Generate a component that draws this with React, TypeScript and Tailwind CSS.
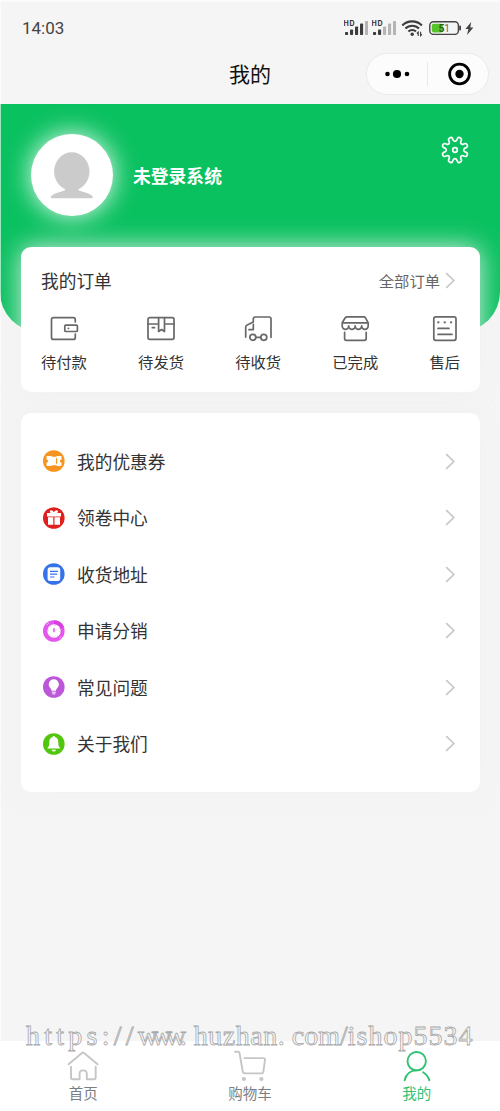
import React from 'react';

interface MenuItem {
  label: string;
  icon: React.ReactNode;
}

// 8-tooth gear outline around (15, 15)
const gearPoint = (r: number, deg: number) => {
  const a = (deg * Math.PI) / 180;
  return `${(15 + r * Math.cos(a)).toFixed(2)} ${(15 + r * Math.sin(a)).toFixed(2)}`;
};

const gearPath =
  Array.from({ length: 8 }, (_, i) => {
    const t = i * 45 + 22.5;
    return `${i === 0 ? 'M' : 'L'}${gearPoint(9.9, t - 12.5)} L${gearPoint(12, t - 10)} Q${gearPoint(13.3, t - 8)} ${gearPoint(13.2, t - 2)} L${gearPoint(13.2, t + 2)} Q${gearPoint(13.3, t + 8)} ${gearPoint(12, t + 10)} L${gearPoint(9.9, t + 12.5)} Q${gearPoint(7.6, t + 22.5)} ${gearPoint(9.9, t + 32.5)}`;
  }).join(' ') + 'Z';

const Signal = ({ strength }: { strength: number }) => (
  <svg width="24" height="16" viewBox="0 0 24 16">
    <text x="-0.5" y="5.8" fontSize="7" fontWeight="700" fontFamily="Inter, sans-serif" fill="#333" textLength="11">
      HD
    </text>
    {[3, 5.5, 8.5, 11.5, 14].map((h, i) => (
      <rect key={i} x={1 + i * 5} y={15 - h} width="3.1" height={h} rx="0.8" fill={i < strength ? '#3c3c3c' : '#b4b4b4'} />
    ))}
  </svg>
);

const StatusBar = () => (
  <div className="flex h-14 items-center justify-between pl-[22px] pr-[26px]">
    <span className="mt-0.5 font-[Roboto,sans-serif] text-[17px] text-[#444]">14:03</span>
    <div className="flex items-center">
      <Signal strength={4} />
      <span className="w-1" />
      <Signal strength={2} />
      <svg className="ml-[5px]" width="24" height="18" viewBox="0 0 24 18" fill="none" stroke="#3c3c3c" strokeWidth="2.1">
        <path d="M1.3 6.4a14 14 0 0 1 19.6 0" />
        <path d="M4.4 9.6a9.6 9.6 0 0 1 13.6 0" />
        <path d="M7.4 12.6a5.4 5.4 0 0 1 7.6 0" />
        <circle cx="11.2" cy="15.2" r="1.7" fill="#3c3c3c" stroke="none" />
        <path d="M17.2 17v-3.8l-1.3 1.3M19.6 12.8v3.8l1.3-1.3" strokeWidth="1.1" />
      </svg>
      <svg className="ml-1" width="33" height="14" viewBox="0 0 33 14">
        <rect x="0.8" y="0.8" width="28.6" height="12.6" rx="3.6" fill="none" stroke="#444" strokeWidth="1.4" />
        <rect x="2.8" y="2.8" width="11" height="8.6" rx="1.8" fill="#57c32b" />
        <rect x="30.2" y="4.6" width="1.8" height="5" rx="0.8" fill="#444" />
        <text x="9.5" y="10.8" fontSize="10.5" fontWeight="600" fontFamily="Roboto, sans-serif" fill="#2c5f1c">5</text>
        <text x="15" y="10.8" fontSize="10.5" fontFamily="Roboto, sans-serif" fill="#666">1</text>
      </svg>
      <svg className="ml-[3px]" width="9" height="13" viewBox="0 0 9 13" fill="#444">
        <path d="M6.2 0 0.4 7h3L2 13l6.4-7.6H5.3Z" />
      </svg>
    </div>
  </div>
);

const NavBar = () => (
  <div className="grid h-12 grid-cols-3 items-start">
    <span />
    <h1 className="mt-px text-center text-[21px] leading-8 text-[#111]">我的</h1>
    <div className="mt-[-3px] mr-[11px] flex h-[42px] w-[123px] items-center justify-self-end rounded-full border border-[#ebebeb] bg-[#fcfcfc]">
      <svg className="w-[60px]" height="24" viewBox="0 0 60 24">
        <circle cx="20.5" cy="12" r="2.3" />
        <circle cx="30" cy="12" r="4.1" />
        <circle cx="40" cy="12" r="2.3" />
      </svg>
      <span className="h-6 w-px bg-[#e8e8e8]" />
      <svg className="w-[60px]" height="24" viewBox="0 0 60 24">
        <circle cx="31.5" cy="12" r="9.9" fill="none" stroke="#000" strokeWidth="2.8" />
        <circle cx="31.5" cy="12" r="4.2" />
      </svg>
    </div>
  </div>
);

const Chevron = () => (
  <svg width="11" height="17" viewBox="0 0 11 17" fill="none" stroke="#c6c6c6" strokeWidth="1.6">
    <path d="M1.2 1.2 8.8 8.5 1.2 15.8" />
  </svg>
);

const OrderIcon = ({ children }: { children: React.ReactNode }) => (
  <svg width="30" height="30" viewBox="0 0 30 30" fill="none" stroke="#686868" strokeWidth="1.7" strokeLinecap="round" strokeLinejoin="round">
    {children}
  </svg>
);

const orders: MenuItem[] = [
  {
    label: '待付款',
    icon: (
      <OrderIcon>
        <path d="M26.3 9V6.6q0-2-2-2H4.5q-2 0-2 2v17.8q0 2 2 2h19.8q2 0 2-2V21" />
        <rect x="15.8" y="12.1" width="12.6" height="6.4" rx="1" />
        <path d="M19.3 15.3h.2" />
      </OrderIcon>
    ),
  },
  {
    label: '待发货',
    icon: (
      <OrderIcon>
        <rect x="2" y="4.6" width="26" height="21.8" rx="1.8" />
        <path d="M2 11h10.6M18.5 11H28M12.6 4.6v13.9l3-2 2.9 2V4.6M6.3 14.7h2.2" />
      </OrderIcon>
    ),
  },
  {
    label: '待收货',
    icon: (
      <OrderIcon>
        <path d="M10.3 9V6q0-2 2-2H26q2 0 2 2v18.3M10.3 9 4.2 12q-1.5.7-1.5 2.3v9.8" />
        <path d="M10.3 11.4v5.3H6M13 24.3h4.5" />
        <circle cx="9.8" cy="24.3" r="3" />
        <circle cx="20.8" cy="24.3" r="3" />
      </OrderIcon>
    ),
  },
  {
    label: '已完成',
    icon: (
      <OrderIcon>
        <path d="M7 3.8h17q1 0 1.5 1l2.7 5v3a3.25 3.6 0 0 1-6.5 0 3.25 3.6 0 0 1-6.5 0 3.25 3.6 0 0 1-6.5 0 3.25 3.6 0 0 1-6.5 0v-3l3-5Q6 3.8 7 3.8ZM2.4 9.8h25.7" />
        <path d="M4.6 19.3v6.2q0 1.8 1.8 1.8h18q1.8 0 1.8-1.8v-6.2" />
      </OrderIcon>
    ),
  },
  {
    label: '售后',
    icon: (
      <OrderIcon>
        <rect x="3.8" y="3.8" width="22.2" height="23.5" rx="2" />
        <path d="M8.3 9.3h.1M14.7 9.3h.1M21 9.3h.1" strokeWidth="2.3" />
        <path d="M8 15.4h11M8 21.3h14" />
      </OrderIcon>
    ),
  },
];

const Badge = ({ color, children }: { color: string; children: React.ReactNode }) => (
  <svg width="22" height="22" viewBox="0 0 22 22">
    <circle cx="10.8" cy="11" r="10.8" fill={color} />
    {children}
  </svg>
);

const menu: MenuItem[] = [
  {
    label: '我的优惠券',
    icon: (
      <Badge color="#f7941f">
        <path d="M4.3 6h4l.8.7h4.2L14 6h3.7q.8 0 .8.8v2.6a1.6 1.6 0 0 0 0 3.2v2.6q0 .8-.8.8H14l-.7-.7H9.1l-.8.7h-4q-.8 0-.8-.8v-2.6a1.6 1.6 0 0 0 0-3.2V6.8q0-.8.8-.8Z" fill="#fff" />
        <path d="M13.6 8.3v5.4" stroke="#f7941f" strokeWidth="1.2" />
      </Badge>
    ),
  },
  {
    label: '领卷中心',
    icon: (
      <Badge color="#e0201f">
        <path d="M4 6h14v3.4H4ZM5 10.2h5.3v7.5H5ZM11.5 10.2H17v7.5h-5.5Z" fill="#fff" />
        <path d="M10.9 6.3Q7.4 6 7.5 4.4q1-1.4 3.4 1.9 2.4-3.3 3.5-1.9.1 1.6-3.5 1.9" fill="none" stroke="#fff" strokeWidth="1.3" />
      </Badge>
    ),
  },
  {
    label: '收货地址',
    icon: (
      <Badge color="#3572ea">
        <rect x="4.6" y="4.2" width="12.6" height="13.8" rx="2.5" fill="#fff" />
        <path d="M7 8.4h8M7 11.2h7.2M7 14h4.5" stroke="#3572ea" strokeWidth="1.2" />
      </Badge>
    ),
  },
  {
    label: '申请分销',
    icon: (
      <Badge color="#e455ee">
        <path d="M11 .2A10.8 10.8 0 0 1 21 7L11 11Z" fill="#d63ee0" />
        <path d="M3.5 5 6 3M16.500 18.500l2-2" stroke="#f5a6fa" strokeWidth="1" />
        <circle cx="11" cy="11" r="6.7" fill="#fff" />
        <circle cx="11" cy="11" r="5.7" fill="none" stroke="#efa3f3" strokeWidth="1" strokeDasharray="0.8 3.7" />
        <ellipse cx="11" cy="10.2" rx="1.2" ry="2.4" fill="#e680ec" />
      </Badge>
    ),
  },
  {
    label: '常见问题',
    icon: (
      <Badge color="#bb57d8">
        <path d="M10.8 3.3a5.1 5.1 0 0 0-5.1 5.1c0 2.8 2.7 3.7 2.9 6.3H13c.2-2.6 2.9-3.5 2.9-6.3a5.1 5.1 0 0 0-5.1-5.1Z" fill="#fff" />
        <path d="M8.7 16.2h4.2M9.3 17.9h3" stroke="#fff" strokeWidth="1" />
      </Badge>
    ),
  },
  {
    label: '关于我们',
    icon: (
      <Badge color="#52c60d">
        <path d="M10.8 2.9q-1.1 0-1.2 1.2C7 4.8 6.3 7 6.3 9.2c0 3.2-.4 4-2 6.3h13c-1.6-2.3-2-3.1-2-6.3 0-2.2-.7-4.4-3.3-5.1q-.1-1.2-1.2-1.2ZM8.500 16.700h4.600q-.7 1.900-2.300 1.900t-2.300-1.900Z" fill="#fff" />
      </Badge>
    ),
  },
];

const TabIcon = ({ children }: { children: React.ReactNode }) => (
  <svg width="32" height="32" viewBox="0 0 32 32" fill="none" stroke="currentColor" strokeWidth="1.9" strokeLinecap="round" strokeLinejoin="round">
    {children}
  </svg>
);

const tabs = [
  {
    label: '首页',
    active: false,
    icon: (
      <TabIcon>
        <path d="M1.6 14.3 15 3q1-.8 2 0l13.6 11.3" />
        <path d="M4 16.8v10.7q0 1.7 1.7 1.7h6.9v-5.4q0-3.4 3.6-3.4t3.6 3.4v5.4h7.2q1.7 0 1.7-1.7V16.8" />
      </TabIcon>
    ),
  },
  {
    label: '购物车',
    active: false,
    icon: (
      <TabIcon>
        <path d="M1 1.7h3.2q1 0 1.3 1.3l3.2 18.2q.3 2.2 2.2 2.2h16.3q1.900 0 2.200-2L31 10q.2-1.900-1.600-1.900H10.500" />
        <circle cx="9.9" cy="29" r="2.1" fill="currentColor" stroke="none" />
        <circle cx="27.4" cy="29" r="2.1" fill="currentColor" stroke="none" />
      </TabIcon>
    ),
  },
  {
    label: '我的',
    active: true,
    icon: (
      <TabIcon>
        <circle cx="15.7" cy="11.2" r="9.2" />
        <path d="M3.6 30.3Q6 20.5 15.7 20.4M22.1 22.3q4.8 3 6.2 8" />
      </TabIcon>
    ),
  },
];

export default function App() {
  return (
    <div className="relative flex h-[1111px] w-[500px] flex-col overflow-hidden bg-[#f5f5f5] font-['Noto_Sans_CJK_SC',sans-serif] text-[#333]">
      <StatusBar />
      <NavBar />

      <header className="h-[228px] shrink-0 rounded-b-[40px] bg-[#0ac160]">
        <div className="flex items-start pt-[30px] pl-[31px] pr-[30px]">
          <div className="flex size-[82px] items-center justify-center rounded-full bg-white shadow-[0_0_26px_rgba(255,255,255,0.95)]">
            <svg width="44" height="48" viewBox="0 0 44 48" fill="#cbcbcb">
              <ellipse cx="21.8" cy="20.5" rx="17.7" ry="19.2" />
              <path d="M15.5 34v4.5q-1 1.300-4 2Q4 42.300 1.300 45q-1.200 2 .5 2.200h40q1.700-.2.500-2.200-2.700-2.700-10.200-4.500-3-.7-4-2V34Z" />
            </svg>
          </div>
          <span className="mt-[27px] ml-5 flex-1 text-[17.8px] leading-7 font-bold text-white">未登录系统</span>
          <svg className="mt-px" width="30" height="30" viewBox="0 0 30 30" fill="none" stroke="#fff" strokeWidth="1.7" strokeLinejoin="round">
            <path d={gearPath} />
            <circle cx="15" cy="15" r="2.3" />
          </svg>
        </div>
      </header>

      <section className="mr-5 -mt-[85px] ml-[21px] h-[145px] shrink-0 rounded-[10px] bg-white px-5 pt-[19px] shadow-[0_0_26px_rgba(241,241,241,0.9)]">
        <div className="flex h-7 items-center justify-between">
          <h2 className="text-[17.7px]">我的订单</h2>
          <div className="flex items-center gap-[5px] pr-1 text-[15.3px] text-[#666]">
            全部订单
            <Chevron />
          </div>
        </div>
        <div className="mt-[19px] flex justify-between">
          {orders.map(o => (
            <div key={o.label} className="flex flex-col items-center">
              {o.icon}
              <span className="mt-[7px] text-[15.3px] leading-[22px]">{o.label}</span>
            </div>
          ))}
        </div>
      </section>

      <section className="mt-[21px] mr-5 ml-[21px] h-[379px] shrink-0 rounded-[10px] bg-white pt-5 pr-6 pl-[22px] shadow-[0_0_26px_rgba(241,241,241,0.9)]">
        {menu.map(m => (
          <div key={m.label} className="flex h-[56.5px] items-center">
            {m.icon}
            <span className="ml-3 flex-1 text-[17.7px]">{m.label}</span>
            <Chevron />
          </div>
        ))}
      </section>

      <nav className="mt-auto grid h-[70px] grid-cols-3 bg-white pt-[9px]">
        {tabs.map(t => (
          <div key={t.label} className={t.active ? 'flex flex-col items-center text-[#2fc273]' : 'flex flex-col items-center text-[#c6c6c6]'}>
            {t.icon}
            <span className={t.active ? 'text-[14.5px] leading-[22px]' : 'text-[14.5px] leading-[22px] text-[#7a7e83]'}>{t.label}</span>
          </div>
        ))}
      </nav>

      {/* watermark, tracked per segment to an even 14px pitch */}
      <div className="absolute top-[1020px] left-[26px] font-['Liberation_Serif',serif] text-[28px] leading-8 whitespace-nowrap text-white/40 opacity-99 [-webkit-text-stroke:0.8px_#a8a8a8]">
        <span className="tracking-[4.25px]">https://</span>
        <span className="tracking-[-6.2px]">www</span>
        <span className="tracking-[7px]">.</span>
        <span className="tracking-[0.5px]">huzhan</span>
        <span className="tracking-[7px]">.</span>
        <span>com/</span>
        <span className="tracking-[1px]">ishop5534</span>
      </div>
      <div className="pointer-events-none absolute inset-0 border-t-2 border-l border-white/60" />
    </div>
  );
}
